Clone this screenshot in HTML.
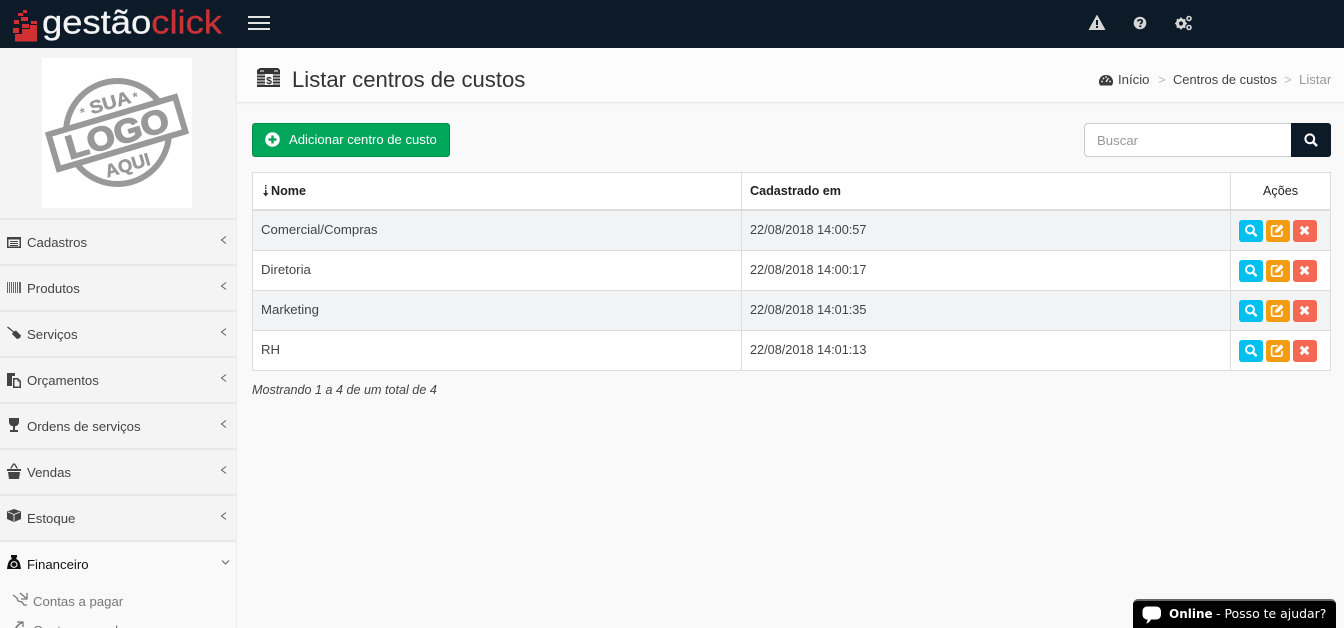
<!DOCTYPE html>
<html lang="pt-BR">
<head>
<meta charset="utf-8">
<title>Listar centros de custos</title>
<style>
*{box-sizing:border-box}
html,body{margin:0;padding:0;width:1344px;height:628px;overflow:hidden}
#page{position:relative;width:1344px;height:628px;overflow:hidden;background:#f9f9f9;font-family:"Liberation Sans",sans-serif;font-size:13.2px;color:#444}
.abs,.t{position:absolute}
.t{white-space:nowrap;line-height:18px}
svg{position:absolute;display:block;overflow:visible}
#nav{position:absolute;left:0;top:0;width:1344px;height:48px;background:#0d1b28}
#side{position:absolute;left:0;top:48px;width:237px;height:580px;background:#f4f4f4;border-right:1px solid #ececec}
.line{position:absolute;left:0;width:236px;height:2px;background:#e8e8e8}
#active{position:absolute;left:0;top:541px;width:236px;height:87px;background:#f9f9f9}
#head{position:absolute;left:237px;top:48px;width:1107px;height:55px;background:#fcfcfc;border-bottom:1px solid #e8e8e8;box-shadow:0 1px 2px rgba(0,0,0,.04)}
#add{position:absolute;left:252px;top:123px;width:198px;height:34px;background:#00a65a;border:1px solid #008d4c;border-radius:3px}
#search{position:absolute;left:1084px;top:123px;width:208px;height:34px;background:#fff;border:1px solid #ccc;border-right:0;border-radius:4px 0 0 4px}
#sbtn{position:absolute;left:1291px;top:123px;width:40px;height:34px;background:#0d1b28;border-radius:0 3px 3px 0}
#table{position:absolute;left:252px;top:172px;width:1079px;height:199px;background:#fff;border:1px solid #ddd}
.row{position:absolute;left:0;width:1077px}
.vl{position:absolute;top:0;width:1px;height:197px;background:#ddd}
.b{position:absolute;width:24px;height:22px;border-radius:3px}
.th{font-weight:bold;color:#222;font-size:12.6px}
.d{font-size:12.7px}
#chat{position:absolute;left:1133px;top:599px;width:203px;height:29px;background:#000;border-top:2px solid #666;border-radius:5px 5px 0 0}
</style>
</head>
<body>
<div id="page">

<div id="nav">
  <svg style="left:0;top:0" width="280" height="48" viewBox="0 0 280 48">
    <g fill="#d03034">
      <path d="M15 41.500V34h7v-5h8v-4h7v16.500z"/>
      <rect x="13" y="28" width="6" height="5"/><rect x="14" y="20" width="5" height="4"/>
      <rect x="18" y="13" width="5" height="3"/><rect x="23" y="10" width="4" height="3"/>
      <rect x="21" y="17" width="7" height="4"/><rect x="31" y="21" width="6" height="3"/>
      <rect x="22" y="24" width="7" height="4"/>
    </g>
    <text x="42" y="33.500" font-size="33.500" fill="#f1f3f4" stroke="#f1f3f4" stroke-width=".3" font-family="Liberation Sans,sans-serif" textLength="180" lengthAdjust="spacingAndGlyphs">gestão<tspan fill="#c93137" stroke="#c93137">click</tspan></text>
    <g fill="#e4e4e4"><rect x="248" y="16" width="22" height="2"/><rect x="248" y="22" width="22" height="2"/><rect x="248" y="28" width="22" height="2"/></g>
  </svg>
  <svg style="left:1088px;top:14px" width="18" height="18" viewBox="0 0 18 18">
    <path d="M9 1.500 16.700 15.500H1.300z" fill="#d6d6d6" stroke="#d6d6d6" stroke-linejoin="round"/>
    <rect x="8" y="6" width="2" height="5" fill="#0d1b28"/><rect x="8" y="12" width="2" height="2" fill="#0d1b28"/>
  </svg>
  <svg style="left:1133px;top:16px" width="14" height="14" viewBox="0 0 14 14">
    <circle cx="7" cy="7" r="6.300" fill="#d6d6d6"/>
    <path d="M4.800 5.400C5 3.400 9.300 3.400 9.300 5.600 9.300 7 7.300 7 7.300 8.300" fill="none" stroke="#0d1b28" stroke-width="1.700"/>
    <rect x="6.300" y="9.400" width="2" height="1.800" fill="#0d1b28"/>
  </svg>
  <svg style="left:1175px;top:15px" width="18" height="16" viewBox="0 0 18 16">
    <circle cx="6" cy="8.500" r="3.600" fill="none" stroke="#d6d6d6" stroke-width="3"/>
    <circle cx="14" cy="3.500" r="2" fill="none" stroke="#d6d6d6" stroke-width="1.600"/>
    <circle cx="14" cy="12.500" r="2" fill="none" stroke="#d6d6d6" stroke-width="1.600"/>
    <path d="M6 2.500v2M6 12.500v2M0 8.500h2M10 8.500h2M1.800 4.300l1.400 1.400M8.800 11.300l1.400 1.400M1.800 12.700l1.400-1.400M8.800 5.700l1.400-1.400" stroke="#d6d6d6" stroke-width="1.600"/>
  </svg>
</div>

<div id="side"></div>
<div class="abs" style="left:42px;top:58px;width:150px;height:150px;background:#fff"></div>
<svg style="left:42px;top:58px" width="150" height="150" viewBox="0 0 150 150">
  <circle cx="75.500" cy="74.500" r="51.500" fill="none" stroke="#999" stroke-width="6"/>
  <g transform="rotate(-16.5 75 75)" font-family="Liberation Sans,sans-serif" font-weight="bold" fill="#999" text-anchor="middle">
    <rect x="9" y="57" width="132" height="36" fill="#fff" stroke="#999" stroke-width="6"/>
    <text x="75" y="87" font-size="33" stroke="#999" stroke-width="1.500" textLength="106" lengthAdjust="spacingAndGlyphs">LOGO</text>
    <text x="77" y="50" font-size="18" stroke="#999" stroke-width=".5" textLength="42" lengthAdjust="spacingAndGlyphs">SUA</text>
    <text x="76" y="115" font-size="18" stroke="#999" stroke-width=".5" textLength="46" lengthAdjust="spacingAndGlyphs">AQUI</text>
    <text x="48" y="50" font-size="13">*</text>
    <text x="103" y="50" font-size="13">*</text>
  </g>
</svg>

<div id="active"></div>
<div class="line" style="top:218px"></div>
<div class="line" style="top:264px"></div>
<div class="line" style="top:310px"></div>
<div class="line" style="top:356px"></div>
<div class="line" style="top:402px"></div>
<div class="line" style="top:448px"></div>
<div class="line" style="top:494px"></div>
<div class="line" style="top:540px"></div>

<div class="t" style="left:27px;top:234px">Cadastros</div>
<div class="t" style="left:27px;top:280px">Produtos</div>
<div class="t" style="left:27px;top:326px">Serviços</div>
<div class="t" style="left:27px;top:372px">Orçamentos</div>
<div class="t" style="left:27px;top:418px">Ordens de serviços</div>
<div class="t" style="left:27px;top:464px">Vendas</div>
<div class="t" style="left:27px;top:510px">Estoque</div>
<div class="t" style="left:27px;top:556px;color:#111">Financeiro</div>
<div class="t" style="left:33px;top:593px;color:#777">Contas a pagar</div>
<div class="t" style="left:33px;top:622px;color:#777">Contas a receber</div>

<svg style="left:0;top:0" width="237" height="628" viewBox="0 0 237 628">
  <g fill="none" stroke="#666" stroke-width="1.100">
    <path d="M226 236.500l-4.500 3.500 4.500 3.500"/><path d="M226 282.500l-4.500 3.500 4.500 3.500"/>
    <path d="M226 328.500l-4.500 3.500 4.500 3.500"/><path d="M226 374.500l-4.500 3.500 4.500 3.500"/>
    <path d="M226 420.500l-4.500 3.500 4.500 3.500"/><path d="M226 466.500l-4.500 3.500 4.500 3.500"/>
    <path d="M226 512.500l-4.500 3.500 4.500 3.500"/><path d="M222 560.500l3.500 3.500 3.500-3.500"/>
  </g>
  <g fill="#444">
    <path d="M7 237h14v11H7zm1.500 2.500v7h11v-7z" fill-rule="evenodd"/>
    <path d="M10 241h8v1h-8zM10 243h8v1h-8zM10 245h8v1h-8z"/>
    <path d="M7 282h1v11H7zM9 282h1v11H9zM11 282h1v11h-1zM13 282h1v11h-1zM15 282h1v11h-1zM17 282h1v11h-1zM19 282h2v11h-2z" fill="#666"/>
    <path d="M7 327.500l1-1 6 5 2-1 5 5-1 2.500-3 1-5-5 1-2z"/>
    <path d="M7 373h8v3h-3v10H7zM13 378h5l3 3v7h-8z"/><path d="M14.500 379.500v7h5v-5h-2v-2z" fill="#f4f4f4"/>
    <path d="M9 418h10v4c0 2.500-2 4-4 4.300V430h3v2h-8v-2h3v-3.700c-2-.3-4-1.800-4-4.300z"/>
    <path d="M7 469h14v2H7zM8 472h12l-1 7H9z"/><path d="M10 468.500l3-5h2l3 5h-1.500l-2.500-4-2.500 4z"/>
    <path d="M14 509l7 2.500v7.500l-7 3-7-3v-7.500z"/>
    <path d="M14 514.500l-6-2.500M14 514.500l6-2.500M14 514.500v7" stroke="#f4f4f4" stroke-width=".9" fill="none"/>
  </g>
  <path d="M11 555h6v2l-1 2c3 1 4 3 5 10H7c1-7 2-9 5-10l-1-2z" fill="#111"/>
  <ellipse cx="14" cy="564.500" rx="3" ry="2.800" fill="none" stroke="#f9f9f9" stroke-width="1.100"/>
  <g fill="none" stroke="#777" stroke-width="1.300">
    <path d="M13 595l4 3 1 3 4 1 2 3 3 0"/><path d="M20 593l6 5M27 593v6h-6"/>
    <path d="M13 630l4-3 2-3 3-1"/><path d="M16 627l6-5M17 622h6v5"/>
  </g>
</svg>

<div id="head"></div>
<svg style="left:257px;top:67px" width="24" height="21" viewBox="0 0 24 21">
  <path d="M3 1h18l2 2v17H0V3z" fill="#333"/>
  <g stroke="#fcfcfc" stroke-width="1.100"><path d="M0 8h8M0 11h8M0 14h8M0 17h8M16 8h8M16 11h8M16 14h8M16 17h8M3 4h4M17 4h4"/></g>
  <rect x="8" y="7" width="8" height="11" fill="#fcfcfc"/>
  <text x="12" y="17" text-anchor="middle" font-size="10.500" font-weight="bold" fill="#333" font-family="Liberation Sans,sans-serif">$</text>
</svg>
<div class="t" style="left:292px;top:66px;font-size:22.100px;line-height:28px;color:#333">Listar centros de custos</div>

<svg style="left:1099px;top:74px" width="14" height="13" viewBox="0 0 14 13">
  <path d="M7 1a6.700 6.700 0 0 0-5.800 10.500h11.600A6.700 6.700 0 0 0 7 1z" fill="#3a3a3a"/>
  <path d="M7 8l2.500-4" stroke="#fcfcfc" stroke-width="1.200"/>
  <g fill="#fcfcfc"><circle cx="3" cy="7.500" r=".9"/><circle cx="4.500" cy="4.500" r=".9"/><circle cx="7" cy="3" r=".9"/><circle cx="11" cy="7.500" r=".9"/></g>
</svg>
<div class="t" style="left:1118px;top:71px;color:#444">Início</div>
<div class="t" style="left:1158px;top:71px;color:#bbb">&gt;</div>
<div class="t" style="left:1173px;top:71px;color:#444;font-size:12.900px">Centros de custos</div>
<div class="t" style="left:1284px;top:71px;color:#bbb">&gt;</div>
<div class="t" style="left:1299px;top:71px;color:#999">Listar</div>

<div id="add"></div>
<svg style="left:265px;top:132px" width="15" height="15" viewBox="0 0 15 15">
  <circle cx="7.500" cy="7.500" r="7.300" fill="#fff"/>
  <path d="M7.500 3.500v8M3.500 7.500h8" stroke="#00a65a" stroke-width="2.400"/>
</svg>
<div class="t" style="left:289px;top:131px;color:#fff;font-size:13.100px">Adicionar centro de custo</div>

<div id="search"></div>
<div class="t" style="left:1097px;top:132px;color:#999">Buscar</div>
<div id="sbtn"></div>
<svg style="left:1304px;top:133px" width="14" height="14" viewBox="0 0 14 14">
  <circle cx="5.800" cy="5.800" r="4.400" fill="none" stroke="#fff" stroke-width="2"/>
  <path d="M9 9l4 4" stroke="#fff" stroke-width="2.400"/>
</svg>

<div id="table">
  <div class="row" style="top:36px;height:2px;background:#ddd"></div>
  <div class="row" style="top:38px;height:39px;background:#f2f3f5"></div>
  <div class="row" style="top:77px;height:1px;background:#ddd"></div>
  <div class="row" style="top:117px;height:1px;background:#ddd"></div>
  <div class="row" style="top:118px;height:39px;background:#f2f3f5"></div>
  <div class="row" style="top:157px;height:1px;background:#ddd"></div>
  <div class="vl" style="left:488px"></div>
  <div class="vl" style="left:977px"></div>
</div>

<svg style="left:262px;top:185px" width="7" height="12" viewBox="0 0 7 12">
  <path d="M3 0h1.500v1.500H3zM3 2.500h1.500V4H3zM3 5h1.500v3H6.500L3.700 11.500 1 8h2z" fill="#333"/>
</svg>
<div class="t th" style="left:271px;top:182px">Nome</div>
<div class="t th" style="left:750px;top:182px">Cadastrado em</div>
<div class="t" style="left:1263px;top:182px;color:#222;font-size:12.600px">Ações</div>

<div class="t" style="left:261px;top:221px">Comercial/Compras</div>
<div class="t d" style="left:750px;top:221px">22/08/2018 14:00:57</div>
<div class="t" style="left:261px;top:261px">Diretoria</div>
<div class="t d" style="left:750px;top:261px">22/08/2018 14:00:17</div>
<div class="t" style="left:261px;top:301px">Marketing</div>
<div class="t d" style="left:750px;top:301px">22/08/2018 14:01:35</div>
<div class="t" style="left:261px;top:341px">RH</div>
<div class="t d" style="left:750px;top:341px">22/08/2018 14:01:13</div>

<div class="b" style="left:1239px;top:220px;background:#00c0ef"></div><div class="b" style="left:1266px;top:220px;background:#f39c12"></div><div class="b" style="left:1293px;top:220px;background:#f56954"></div>
<div class="b" style="left:1239px;top:260px;background:#00c0ef"></div><div class="b" style="left:1266px;top:260px;background:#f39c12"></div><div class="b" style="left:1293px;top:260px;background:#f56954"></div>
<div class="b" style="left:1239px;top:300px;background:#00c0ef"></div><div class="b" style="left:1266px;top:300px;background:#f39c12"></div><div class="b" style="left:1293px;top:300px;background:#f56954"></div>
<div class="b" style="left:1239px;top:340px;background:#00c0ef"></div><div class="b" style="left:1266px;top:340px;background:#f39c12"></div><div class="b" style="left:1293px;top:340px;background:#f56954"></div>

<svg style="left:0;top:0" width="1344" height="400" viewBox="0 0 1344 400">
  <defs>
    <g id="acts" fill="none" stroke="#fff">
      <circle cx="1250" cy="229.500" r="4" stroke-width="2"/>
      <path d="M1253 232.500l3.700 3.700" stroke-width="2.400"/>
      <path d="M1282 231v3.500a1.700 1.700 0 0 1-1.700 1.700h-7a1.700 1.700 0 0 1-1.700-1.700v-7a1.700 1.700 0 0 1 1.700-1.700h4.500" stroke-width="1.700"/>
      <path d="M1275 232.500l.5-2.500 5.500-5.500 2.500 2.500-5.500 5.500z" fill="#fff" stroke="none"/>
      <path d="M1300.800 226.800l7.400 7.400M1308.200 226.800l-7.400 7.400" stroke-width="3.100"/>
    </g>
  </defs>
  <use href="#acts"/>
  <use href="#acts" y="40"/>
  <use href="#acts" y="80"/>
  <use href="#acts" y="120"/>
</svg>

<div class="t" style="left:252px;top:381px;font-style:italic;font-size:12.600px;color:#444">Mostrando 1 a 4 de um total de 4</div>

<div id="chat"></div>
<svg style="left:1142px;top:606px" width="20" height="19" viewBox="0 0 20 19">
  <path d="M5 0.500h9c3 0 5 2 5 5v3c0 3-2 5-5 5H9c-1 2-3 4-5 4 1-1 1.500-2.500 1.500-4C2.500 13.500 0.500 11.500 0.500 8.500v-3c0-3 2-5 4.500-5z" fill="#fff"/>
</svg>
<div class="t" style="left:1169px;top:605px;color:#fff;font-family:'DejaVu Sans',sans-serif;font-size:12px;font-weight:bold">Online</div>
<div class="t" style="left:1216px;top:605px;color:#fff;font-family:'DejaVu Sans',sans-serif;font-size:12.450px">- Posso te ajudar?</div>

</div>
</body>
</html>
